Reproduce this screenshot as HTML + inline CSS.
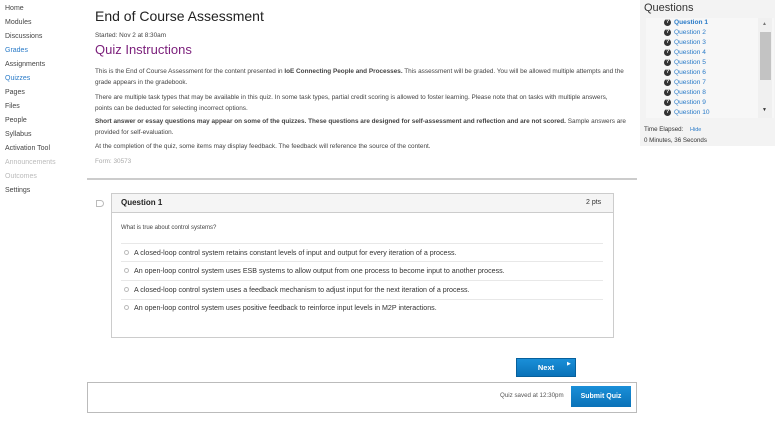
<!DOCTYPE html>
<html><head><meta charset="utf-8"><style>
*{margin:0;padding:0;box-sizing:border-box}
body{width:780px;height:427px;background:#fff;font-family:"Liberation Sans",Arial,sans-serif;color:#333;position:relative;overflow:hidden}
.a{position:absolute;white-space:nowrap}
.nav{font-size:7px;color:#444}
.p{font-size:6.4px;color:#444}
.q{font-size:6.6px;color:#2a7bc8;left:674px}
.ic{position:absolute;left:664px;width:7px;height:7px;border-radius:50%;background:#333;color:#fff;font-size:5.5px;font-weight:bold;text-align:center;line-height:7px}
.opt{font-size:7.1px;color:#333;left:134px}
.rad{position:absolute;left:124px;width:5px;height:5px;border:1px solid #bbb;border-radius:50%}
.hr{position:absolute;left:121px;width:482px;height:1px;background:#e8e8e8}
</style></head><body>
<div class="a nav" style="left:5px;top:5px">Home</div>
<div class="a nav" style="left:5px;top:19px">Modules</div>
<div class="a nav" style="left:5px;top:33px">Discussions</div>
<div class="a nav" style="left:5px;top:47px;color:#2a7bc8">Grades</div>
<div class="a nav" style="left:5px;top:61px">Assignments</div>
<div class="a nav" style="left:5px;top:75px;color:#2a7bc8">Quizzes</div>
<div class="a nav" style="left:5px;top:89px">Pages</div>
<div class="a nav" style="left:5px;top:103px">Files</div>
<div class="a nav" style="left:5px;top:117px">People</div>
<div class="a nav" style="left:5px;top:131px">Syllabus</div>
<div class="a nav" style="left:5px;top:145px">Activation Tool</div>
<div class="a nav" style="left:5px;top:159px;color:#bbb">Announcements</div>
<div class="a nav" style="left:5px;top:173px;color:#bbb">Outcomes</div>
<div class="a nav" style="left:5px;top:187px">Settings</div>

<div class="a" style="left:95px;top:8px;font-size:14px;color:#222">End of Course Assessment</div>
<div class="a p" style="left:95px;top:32px">Started: Nov 2 at 8:30am</div>
<div class="a" style="left:95px;top:42px;font-size:13px;color:#7a1e7a">Quiz Instructions</div>
<div class="a p" style="left:95px;top:68px">This is the End of Course Assessment for the content presented in <b>IoE Connecting People and Processes.</b> This assessment will be graded. You will be allowed multiple attempts and the</div>
<div class="a p" style="left:95px;top:79px">grade appears in the gradebook.</div>
<div class="a p" style="left:95px;top:94px">There are multiple task types that may be available in this quiz. In some task types, partial credit scoring is allowed to foster learning. Please note that on tasks with multiple answers,</div>
<div class="a p" style="left:95px;top:105px">points can be deducted for selecting incorrect options.</div>
<div class="a p" style="left:95px;top:118px"><b>Short answer or essay questions may appear on some of the quizzes. These questions are designed for self-assessment and reflection and are not scored.</b> Sample answers are</div>
<div class="a p" style="left:95px;top:129px">provided for self-evaluation.</div>
<div class="a p" style="left:95px;top:143px">At the completion of the quiz, some items may display feedback. The feedback will reference the source of the content.</div>
<div class="a p" style="left:95px;top:158px;color:#aaa">Form: 30573</div>
<div class="a" style="left:87px;top:178px;width:550px;height:2px;background:#ccc"></div>

<div class="a" style="left:96px;top:200px;width:8px;height:7px;border:1px solid #bbb;border-radius:0 4px 4px 0"></div>
<div class="a" style="left:111px;top:193px;width:503px;height:145px;border:1px solid #ccc"></div>
<div class="a" style="left:112px;top:194px;width:501px;height:19px;background:#f5f5f5;border-bottom:1px solid #ccc"></div>
<div class="a" style="left:121px;top:198px;font-size:8px;font-weight:bold;color:#222">Question 1</div>
<div class="a" style="left:586px;top:199px;font-size:7px;color:#333">2 pts</div>
<div class="a p" style="left:121px;top:225px;font-size:6px">What is true about control systems?</div>
<div class="hr" style="top:243px"></div>
<div class="rad" style="top:250px"></div><div class="a opt" style="top:249px">A closed-loop control system retains constant levels of input and output for every iteration of a process.</div>
<div class="hr" style="top:261px"></div>
<div class="rad" style="top:268px"></div><div class="a opt" style="top:267px">An open-loop control system uses ESB systems to allow output from one process to become input to another process.</div>
<div class="hr" style="top:280px"></div>
<div class="rad" style="top:287px"></div><div class="a opt" style="top:286px">A closed-loop control system uses a feedback mechanism to adjust input for the next iteration of a process.</div>
<div class="hr" style="top:299px"></div>
<div class="rad" style="top:305px"></div><div class="a opt" style="top:304px">An open-loop control system uses positive feedback to reinforce input levels in M2P interactions.</div>

<div class="a" style="left:516px;top:358px;width:60px;height:19px;background:linear-gradient(#1a8fd8,#0a72b8);border:1px solid #07609c;color:#fff;font-size:7.5px;font-weight:bold;text-align:center;line-height:17px">Next</div>
<div class="a" style="left:567px;top:361px;color:#fff;font-size:5px">▶</div>

<div class="a" style="left:87px;top:382px;width:550px;height:31px;border:1px solid #bbb"></div>
<div class="a" style="left:500px;top:392px;font-size:6.2px;color:#555">Quiz saved at 12:30pm</div>
<div class="a" style="left:571px;top:386px;width:60px;height:21px;background:linear-gradient(#1a8fd8,#0a72b8);color:#fff;font-size:7px;font-weight:bold;text-align:center;line-height:21px">Submit Quiz</div>

<div class="a" style="left:640px;top:0;width:135px;height:146px;background:#f3f3f3"></div>
<div class="a" style="left:644px;top:2px;font-size:11px;color:#333">Questions</div>
<div class="a" style="left:646px;top:18px;width:128px;height:100px;background:#f7f7f7"></div>
<div class="a" style="left:758px;top:18px;width:14px;height:100px;background:#f0f0f0"></div>
<div class="a" style="left:760px;top:32px;width:11px;height:48px;background:#c3c3c3"></div>
<div class="a" style="left:762px;top:21px;font-size:5px;color:#777">▲</div>
<div class="a" style="left:762px;top:107px;font-size:5px;color:#333">▼</div>
<div class="ic" style="top:19px">?</div><div class="a q" style="top:19px;font-weight:bold">Question 1</div>
<div class="ic" style="top:29px">?</div><div class="a q" style="top:29px">Question 2</div>
<div class="ic" style="top:39px">?</div><div class="a q" style="top:39px">Question 3</div>
<div class="ic" style="top:49px">?</div><div class="a q" style="top:49px">Question 4</div>
<div class="ic" style="top:59px">?</div><div class="a q" style="top:59px">Question 5</div>
<div class="ic" style="top:69px">?</div><div class="a q" style="top:69px">Question 6</div>
<div class="ic" style="top:79px">?</div><div class="a q" style="top:79px">Question 7</div>
<div class="ic" style="top:89px">?</div><div class="a q" style="top:89px">Question 8</div>
<div class="ic" style="top:99px">?</div><div class="a q" style="top:99px">Question 9</div>
<div class="ic" style="top:109px">?</div><div class="a q" style="top:109px">Question 10</div>
<div class="a" style="left:644px;top:126px;font-size:6.2px;color:#333">Time Elapsed: <span style="color:#2a7bc8;font-size:5.5px;margin-left:5px">Hide</span></div>
<div class="a" style="left:644px;top:137px;font-size:6.2px;color:#333">0 Minutes, 36 Seconds</div>
</body></html>
